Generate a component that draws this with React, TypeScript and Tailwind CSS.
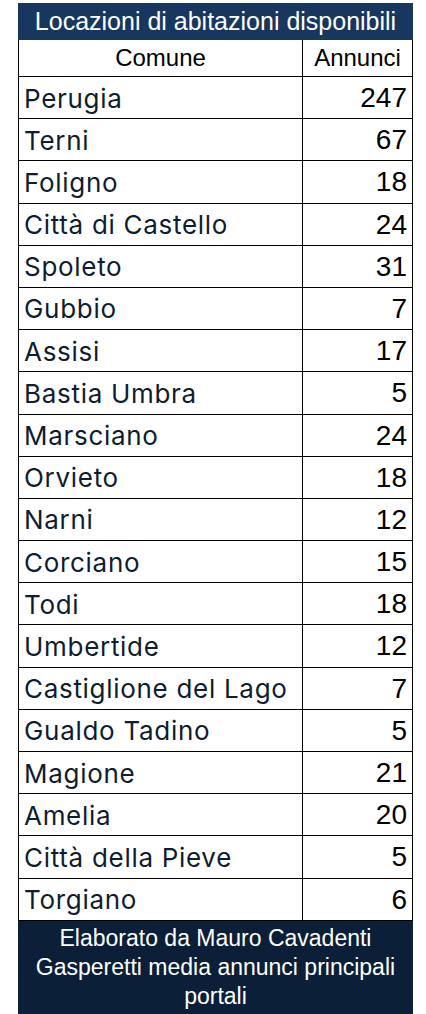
const rows: [string, number][] = [
  ['Perugia', 247],
  ['Terni', 67],
  ['Foligno', 18],
  ['Città di Castello', 24],
  ['Spoleto', 31],
  ['Gubbio', 7],
  ['Assisi', 17],
  ['Bastia Umbra', 5],
  ['Marsciano', 24],
  ['Orvieto', 18],
  ['Narni', 12],
  ['Corciano', 15],
  ['Todi', 18],
  ['Umbertide', 12],
  ['Castiglione del Lago', 7],
  ['Gualdo Tadino', 5],
  ['Magione', 21],
  ['Amelia', 20],
  ['Città della Pieve', 5],
  ['Torgiano', 6],
];

const arial = { fontFamily: '"Liberation Sans", Arial, sans-serif' };

export default function App() {
  return (
    <div className="w-[426px] h-[1014px] bg-white pt-[3px]">
      <div className="ml-[18px] w-[395px]">
        <div
          className="h-[37px] bg-[#17375e] text-white text-[25px] leading-none flex items-center justify-center"
          style={arial}
        >
          Locazioni di abitazioni disponibili
        </div>
        <div className="grid grid-cols-[284px_1fr] h-[37px] border-x border-b border-black text-[24px] text-black" style={arial}>
          <div className="flex items-center justify-center border-r border-black">Comune</div>
          <div className="flex items-center justify-center">Annunci</div>
        </div>
        {rows.map(([name, n]) => (
          <div key={name} className="grid grid-cols-[284px_1fr] h-[42.2px] border-x border-b border-black">
            <div
              className="flex items-center pl-[5px] border-r border-black text-[26px] tracking-[0.7px] text-[#0e1d2f]"
              style={{ fontFamily: 'Inter, "Noto Sans", sans-serif' }}
            >
              {name}
            </div>
            <div className="flex items-center justify-end pr-[5px] text-[28px] text-black" style={arial}>
              {n}
            </div>
          </div>
        ))}
        <div
          className="h-[93px] bg-[#0b1f38] text-white text-[23px] leading-[29px] flex items-center justify-center text-center px-2"
          style={arial}
        >
          Elaborato da Mauro Cavadenti Gasperetti media annunci principali portali
        </div>
      </div>
    </div>
  );
}
